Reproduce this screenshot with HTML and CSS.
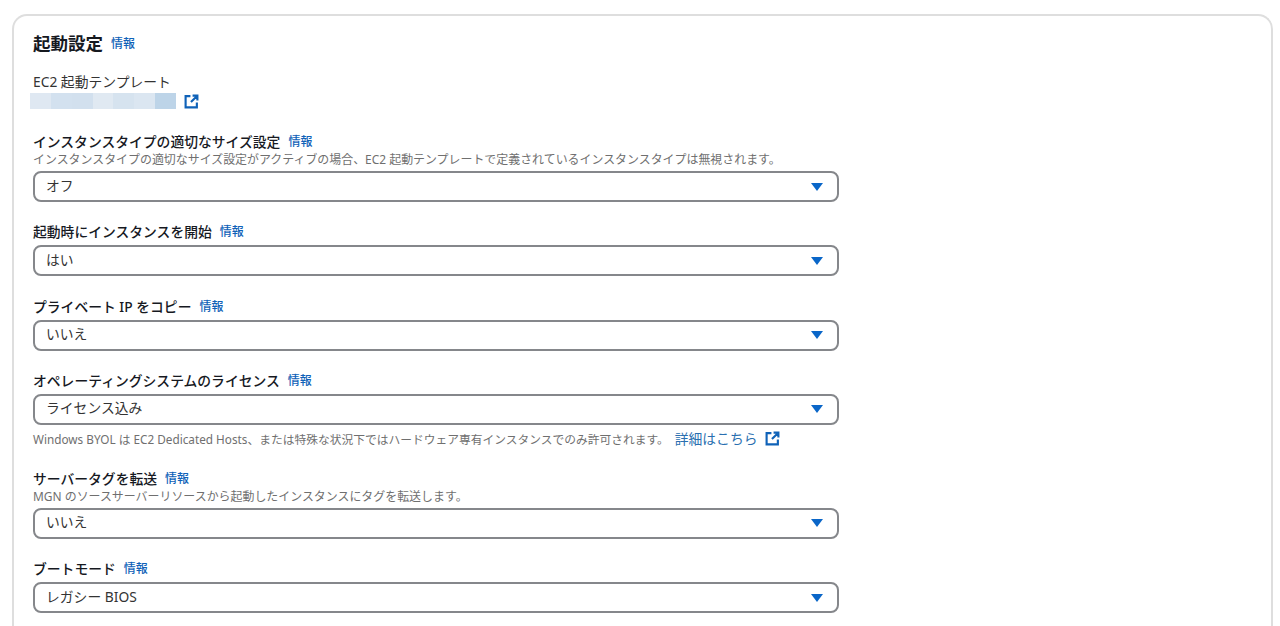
FILE: index.html
```html
<!doctype html>
<html lang="ja">
  <head>
    <meta charset="UTF-8" />
    <title>起動設定</title>
    <link rel="stylesheet" href="styles.css">
  </head>
  <body>
    <div class="card">
      <div class="card-title">
        <h2>起動設定</h2>
        <a class="info" href="#">情報</a>
      </div>

      <!-- EC2 template -->
      <div class="template">
        <div class="template-label">EC2 起動テンプレート</div>
        <div class="template-value">
          <div class="masked">
            <span class="m1"></span><span class="m2"></span><span class="m3"></span><span class="m4"></span><span class="m5"></span><span class="m6"></span><span class="m7"></span>
          </div>
          <svg class="ext" viewBox="0 0 14 14"><path d="M6 2H1.5v10.5H12V8M8 1.5h4.5V6M12.2 1.8 6.5 7.5"/></svg>
        </div>
      </div>

      <div class="field first">
        <div class="label"><strong>インスタンスタイプの適切なサイズ設定</strong><a class="info" href="#">情報</a></div>
        <div class="desc">インスタンスタイプの適切なサイズ設定がアクティブの場合、EC2 起動テンプレートで定義されているインスタンスタイプは無視されます。</div>
        <div class="select"><span>オフ</span><i class="caret"></i></div>
      </div>

      <div class="field gap-a">
        <div class="label"><strong>起動時にインスタンスを開始</strong><a class="info" href="#">情報</a></div>
        <div class="select"><span>はい</span><i class="caret"></i></div>
      </div>

      <div class="field gap-a">
        <div class="label"><strong>プライベート IP をコピー</strong><a class="info" href="#">情報</a></div>
        <div class="select"><span>いいえ</span><i class="caret"></i></div>
      </div>

      <div class="field gap-a">
        <div class="label"><strong>オペレーティングシステムのライセンス</strong><a class="info" href="#">情報</a></div>
        <div class="select"><span>ライセンス込み</span><i class="caret"></i></div>
        <div class="hint">
          <span>Windows BYOL は EC2 Dedicated Hosts、または特殊な状況下ではハードウェア専有インスタンスでのみ許可されます。</span>
          <a class="more" href="#">詳細はこちら</a>
          <svg class="ext" viewBox="0 0 14 14"><path d="M6 2H1.5v10.5H12V8M8 1.5h4.5V6M12.2 1.8 6.5 7.5"/></svg>
        </div>
      </div>

      <div class="field gap-b">
        <div class="label"><strong>サーバータグを転送</strong><a class="info" href="#">情報</a></div>
        <div class="desc">MGN のソースサーバーリソースから起動したインスタンスにタグを転送します。</div>
        <div class="select"><span>いいえ</span><i class="caret"></i></div>
      </div>

      <div class="field gap-a">
        <div class="label"><strong>ブートモード</strong><a class="info" href="#">情報</a></div>
        <div class="select"><span>レガシー BIOS</span><i class="caret"></i></div>
      </div>
    </div>
  </body>
</html>
```

FILE: styles.css
```css
html,
body {
  height: 100%;
}

body {
  font-family: "Noto Sans", "Noto Sans CJK JP", sans-serif;
  margin: 0;
  padding: 14px 7px 0 12px;
  box-sizing: border-box;
  background-color: #fff;
  color: #16191f;
  overflow: hidden;
}

.card {
  border: 2px solid #dedede;
  border-bottom: none;
  border-radius: 15px 15px 0 0;
  padding: 15px 19px 0 19px;
  height: 640px;
  box-sizing: border-box;
}

.card-title {
  display: flex;
  align-items: center;
  height: 24px;
}

.card-title h2 {
  margin: 0;
  font-size: 17.5px;
  font-weight: 700;
  line-height: 24px;
}

.info {
  color: #0f62b8;
  font-size: 12px;
  font-weight: 500;
  margin-left: 8px;
  text-decoration: none;
}

.template {
  margin-top: 18px;
}

.template-label {
  font-size: 13.8px;
  line-height: 18px;
  color: #333;
}

.template-value {
  display: flex;
  align-items: center;
  gap: 8px;
  margin-left: -3px;
  height: 16px;
  margin-top: 2px;
}

.masked {
  display: flex;
  width: 146px;
  height: 16px;
}

.masked span {
  flex: 1;
}

.m1 { background-color: #dfe8f2; }
.m2 { background-color: #d3e1ef; }
.m3 { background-color: #d2e0ee; }
.m4 { background-color: #e0e9f2; }
.m5 { background-color: #d6e3ef; }
.m6 { background-color: #dbe6f1; }
.m7 { background-color: #bdd4e8; }

.ext {
  width: 15px;
  height: 15px;
  flex: none;
  fill: none;
  stroke: #0f62b8;
  stroke-width: 2;
}

.field {
  width: 806px;
}

.first {
  margin-top: 24px;
}

.gap-a {
  margin-top: 21.3px;
}

.gap-b {
  margin-top: 23px;
}

.label {
  display: flex;
  align-items: center;
  font-size: 13.8px;
  line-height: 18px;
  height: 18px;
}

.label strong {
  font-weight: 500;
}

.desc {
  margin-top: 1px;
  font-size: 11.95px;
  line-height: 15px;
  color: #6f6f6f;
  white-space: nowrap;
}

.select {
  display: flex;
  align-items: center;
  justify-content: space-between;
  height: 31px;
  box-sizing: border-box;
  margin-top: 4px;
  padding: 0 14px 0 11px;
  border: 2px solid #85878b;
  border-radius: 8px;
  font-size: 13.8px;
  color: #333;
}

.select span {
  padding-bottom: 4px;
}

.caret {
  width: 0;
  height: 0;
  border-left: 6px solid transparent;
  border-right: 6px solid transparent;
  border-top: 8px solid #0a66c8;
}

.hint {
  display: flex;
  align-items: center;
  gap: 6px;
  margin-top: 6px;
  font-size: 11.76px;
  line-height: 16px;
  color: #6f6f6f;
  white-space: nowrap;
}

.hint .ext {
  margin-left: 1px;
}

.more {
  color: #2a6fb0;
  font-size: 13.8px;
  text-decoration: none;
}
```
